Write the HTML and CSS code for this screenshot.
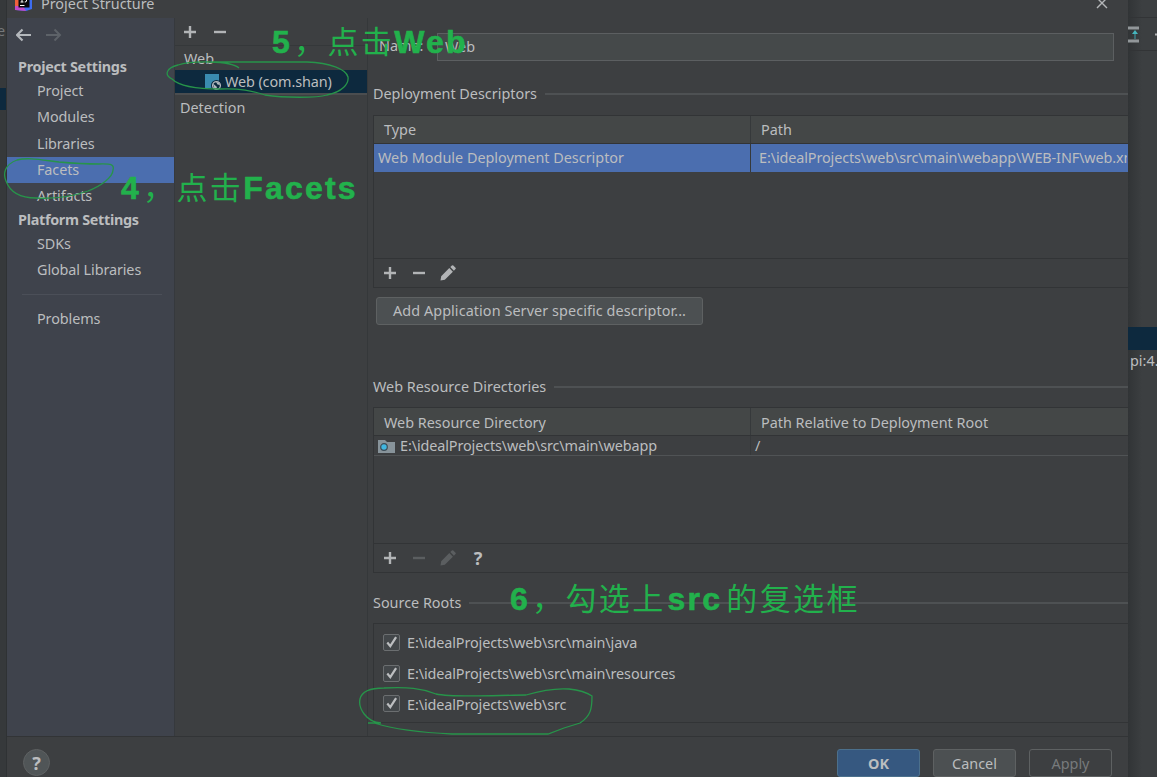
FILE: index.html
```html
<!DOCTYPE html>
<html lang="en">
<head>
  <meta charset="UTF-8" />
  <title>Project Structure</title>
  <meta name="viewport" content="width=device-width, initial-scale=1.0" />
  <link rel="stylesheet" href="styles.css">
</head>
<body>
  <svg class="defs" width="0" height="0">
    <symbol id="plus" viewBox="0 0 16 16"><path d="M8 2v12M2 8h12" stroke="currentColor" stroke-width="2.4" /></symbol>
    <symbol id="minus" viewBox="0 0 16 16"><path d="M2 8h12" stroke="currentColor" stroke-width="2.4" /></symbol>
    <symbol id="pencil" viewBox="0 0 16 16"><path d="M.5 15.5l.7-4.3L9.3 3.1l3.6 3.6-8.1 8.1zM10.3 2.1L11.9.5q.7-.6 1.4 0l2.2 2.2q.6.7 0 1.4l-1.6 1.6z" fill="currentColor" /></symbol>
    <symbol id="check" viewBox="0 0 15 15"><path d="M3.3 7.5l3 3.7 5.8-9" fill="none" stroke="#bcbec0" stroke-width="2.2" /></symbol>
  </svg>

  <div class="desktop">
    <div class="ide-left">
      <span class="ide-letter">e</span>
      <div class="ide-selected"></div>
    </div>

    <div class="dialog">
      <div class="titlebar">
        <svg class="logo" width="18" height="18" viewBox="0 0 18 18">
          <path d="M1 3l8-3 8 3v13l-6 2-10-1z" fill="#3d6df0" />
          <path d="M0 2l6-1-2 14-4 2z" fill="#f0613c" />
          <path d="M0 13h8l3 5-11-1z" fill="#c04ac8" />
          <rect x="3.5" y="3" width="11" height="11.5" fill="#08080c" />
          <path d="M5.5 5h3M7 5v4M5.5 9h3M11.5 5v3q0 1-1.8 1M5 12.5h4.5" stroke="#fff" fill="none" />
        </svg>
        <span class="title">Project Structure</span>
        <svg class="close" width="12" height="12" viewBox="0 0 12 12"><path d="M1 1l10 10M11 1L1 11" stroke="#b4b6b8" stroke-width="1.4" /></svg>
      </div>

      <div class="main">
        <div class="sidebar">
          <div class="history">
            <svg width="16" height="14" viewBox="0 0 16 14"><path d="M6.5 1.5L1 7l5.5 5.5M1 7h14" fill="none" stroke="#b4b8bc" stroke-width="2.2" /></svg>
            <svg width="16" height="14" viewBox="0 0 16 14"><path d="M8.5 1.5L14 7l-5.5 5.5M14 7H0" fill="none" stroke="#5d6268" stroke-width="2" /></svg>
          </div>
          <div class="nav-heading">Project Settings</div>
          <div class="nav-item">Project</div>
          <div class="nav-item">Modules</div>
          <div class="nav-item">Libraries</div>
          <div class="nav-item active">Facets</div>
          <div class="nav-item">Artifacts</div>
          <div class="nav-heading">Platform Settings</div>
          <div class="nav-item">SDKs</div>
          <div class="nav-item">Global Libraries</div>
          <div class="nav-divider"></div>
          <div class="nav-item">Problems</div>
        </div>

        <div class="facets">
          <div class="facets-toolbar">
            <svg class="icon"><use href="#plus" /></svg>
            <svg class="icon"><use href="#minus" /></svg>
          </div>
          <div class="facet-group">Web</div>
          <div class="facet-item">
            <svg width="18" height="18" viewBox="0 0 18 18">
              <rect x="0" y="1" width="14" height="14" fill="#3a8bb0" />
              <circle cx="11.5" cy="12.5" r="5.5" fill="#0d293e" />
              <circle cx="11.5" cy="12.5" r="3.9" fill="none" stroke="#b4babf" stroke-width="1.3" />
              <path d="M8 10.500l4 3.500-1 2.500-2-2zM11 9l1.500 2.500 2.500.5-1-2.500z" fill="#b4babf" />
            </svg>
            <span>Web (com.shan)</span>
          </div>
          <div class="facet-detection">Detection</div>
        </div>

        <div class="content">
          <div class="name-row">
            <label>Name:</label>
            <div class="field">Web</div>
          </div>

          <div class="group-title descriptors-title"><span>Deployment Descriptors</span></div>
          <div class="table descriptors">
            <div class="table-head"><div>Type</div><div>Path</div></div>
            <div class="table-row selected">
              <div>Web Module Deployment Descriptor</div>
              <div class="path">E:\idealProjects\web\src\main\webapp\WEB-INF\web.xml</div>
            </div>
            <div class="table-space"></div>
            <div class="table-toolbar">
              <svg class="icon"><use href="#plus" /></svg>
              <svg class="icon"><use href="#minus" /></svg>
              <svg class="icon"><use href="#pencil" /></svg>
            </div>
          </div>
          <div class="button add-descriptor">Add Application Server specific descriptor...</div>

          <div class="group-title resources-title"><span>Web Resource Directories</span></div>
          <div class="table resources">
            <div class="table-head"><div>Web Resource Directory</div><div>Path Relative to Deployment Root</div></div>
            <div class="table-row">
              <div>
                <svg width="17" height="14" viewBox="0 0 17 14">
                  <path d="M0 1h7l2 2h8v11H0z" fill="#87939a" />
                  <circle cx="6" cy="8" r="3.3" fill="#40b6e0" stroke="#3c4c56" stroke-width="1.2" />
                </svg>
                <span class="path">E:\idealProjects\web\src\main\webapp</span>
              </div>
              <div>/</div>
            </div>
            <div class="table-space"></div>
            <div class="table-toolbar">
              <svg class="icon"><use href="#plus" /></svg>
              <svg class="icon disabled"><use href="#minus" /></svg>
              <svg class="icon disabled"><use href="#pencil" /></svg>
              <span class="question">?</span>
            </div>
          </div>

          <div class="group-title roots-title"><span>Source Roots</span></div>
          <div class="roots">
            <div class="root"><svg class="checkbox"><use href="#check" /></svg><span class="path">E:\idealProjects\web\src\main\java</span></div>
            <div class="root"><svg class="checkbox"><use href="#check" /></svg><span class="path">E:\idealProjects\web\src\main\resources</span></div>
            <div class="root"><svg class="checkbox"><use href="#check" /></svg><span class="path">E:\idealProjects\web\src</span></div>
          </div>
        </div>
      </div>

      <div class="footer">
        <div class="help">?</div>
        <div class="button primary">OK</div>
        <div class="button">Cancel</div>
        <div class="button off">Apply</div>
      </div>
    </div>

    <div class="ide-right">
      <div class="ide-tools">
        <svg width="29" height="17" viewBox="0 0 29 17">
          <path d="M0 2h11M0 15h11" stroke="#92979a" stroke-width="3" />
          <path d="M7 5v8" stroke="#3d7f87" stroke-width="1.5" />
          <path d="M4 8l3-4 3 4z" fill="#45b5bd" />
          <path d="M27 8.5h2" stroke="#afb1b3" stroke-width="2" />
        </svg>
      </div>
      <div class="ide-selected"></div>
      <span class="ide-text">pi:4.</span>
    </div>

    <!-- hand-drawn notes over the dialog -->
    <svg class="circles" width="1157" height="777" viewBox="0 0 1157 777">
      <path d="M59 162C42 160 28 157 17 160C4 165 3 174 6 181C10 192 20 198 36 198C54 199 74 196 88 191C101 186 113 177 113 170C115 163 108 164 99 164C82 164 70 163 59 162" />
      <path d="M239 68C230 60 190 61 178 65C166 68 164 75 172 79C180 87 200 89 220 89C240 88 252 91 265 95C284 98 317 98 327 95C342 92 349 84 348 77C346 69 330 63 307 62H213" />
      <path d="M368 723H381C366 722 358 708 360 699C362 690 373 688 384 688C408 687 421 688 436 694C454 698 500 695 526 695C543 690 556 688 569 689C578 690 586 692 592 696C592 708 591 716 580 723L564 728L548 734H452C430 733 400 731 374 723" />
    </svg>
    <div class="note note-facets" lang="zh"><b class="step">4</b>，点击<b>Facets</b></div>
    <div class="note note-web" lang="zh"><b class="step">5</b>，点击<b>Web</b></div>
    <div class="note note-src" lang="zh"><b class="step">6</b>，勾选上<b class="word">src</b>的复选框</div>
  </div>
</body>
</html>
```

FILE: styles.css
```css
:root {
  --bg: #3d3f41;
  --text: #bbbdbf;
  --sidebar: #3f434c;
  --select: #4b6eaf;
  --select-dark: #0d293e;
  --line: #323436;
  --green: #22b14c;
}

* {
  box-sizing: border-box;
}

body {
  margin: 0;
  font-family: "Noto Sans", "Noto Sans CJK SC", sans-serif;
  font-size: 14.4px;
  line-height: 20px;
  color: var(--text);
  background-color: var(--bg);
  white-space: nowrap;
  overflow: hidden;
}

svg {
  display: block;
  flex: none;
}

.defs {
  position: absolute;
}

.desktop {
  position: relative;
  display: flex;
  width: 1157px;
  height: 777px;
  overflow: hidden;
}

/* IDE window behind the dialog */
.ide-left {
  width: 6px;
  padding-top: 21px;
  background-color: #36393b;
  overflow: hidden;
}

.ide-letter {
  display: block;
  margin-left: -3px;
  color: #75787a;
}

.ide-left .ide-selected {
  height: 22px;
  margin-top: 47px;
}

.ide-selected {
  background-color: var(--select-dark);
}

.ide-right {
  width: 29px;
  padding-top: 17px;
  background: linear-gradient(90deg, #313436, #3c3f41 14px);
  overflow: hidden;
}

.ide-tools {
  height: 34px;
  padding-top: 8px;
  border-top: 1px solid var(--line);
  border-bottom: 1px solid var(--line);
}

.ide-right .ide-selected {
  height: 23px;
  margin-top: 276px;
}

.ide-text {
  display: block;
  margin: 1px 0 0 2px;
}

/* Dialog */
.dialog {
  display: flex;
  flex-direction: column;
  width: 1122px;
  background-color: var(--bg);
  border-left: 1px solid #2f3234;
}

.titlebar {
  display: flex;
  height: 18px;
  padding: 0 20px 0 8px;
}

.logo {
  margin-top: -7px;
}

.title {
  margin: -6px auto 0 8px;
}

.close {
  margin-top: -3px;
}

.main {
  display: flex;
  height: 719px;
  border-bottom: 1px solid var(--line);
}

.sidebar {
  width: 168px;
  background-color: var(--sidebar);
  border-right: 1px solid #36393d;
}

.history {
  display: flex;
  gap: 14px;
  height: 38.4px;
  padding: 10px 0 0 9px;
}

.nav-heading {
  height: 22px;
  padding-left: 11px;
  line-height: 21px;
  font-weight: bold;
  letter-spacing: -0.3px;
}

.nav-item {
  height: 26.1px;
  padding-left: 30px;
  line-height: 25.4px;
  letter-spacing: -0.1px;
}

.nav-item.active {
  background-color: var(--select);
}

.nav-divider {
  height: 1px;
  margin: 11px 12px 11px 15px;
  background-color: #4b4f58;
}

.facets {
  width: 193px;
  border-right: 1px solid #35383a;
}

.facets-toolbar {
  display: flex;
  gap: 14px;
  height: 28px;
  padding: 6px 0 0 7px;
  border-bottom: 1px solid #35383a;
}

.icon {
  width: 16px;
  height: 16px;
  color: #b2b4b6;
}

.icon.disabled {
  color: #5b5e60;
}

.facet-group {
  height: 24px;
  padding-left: 9px;
  line-height: 25px;
}

.facet-item {
  display: flex;
  gap: 2px;
  align-items: center;
  height: 25px;
  padding-left: 30px;
  letter-spacing: -0.1px;
  background-color: var(--select-dark);
  border-bottom: 2px solid #4b4d4f;
}

.facet-detection {
  padding: 3px 0 0 5px;
}

.content {
  flex: 1;
  padding: 15px 0 0 5px;
}

.name-row {
  display: flex;
  height: 28px;
  padding: 0 14px 0 6px;
  line-height: 26px;
}

.name-row label {
  width: 58px;
}

.field {
  flex: 1;
  padding-left: 7px;
  background-color: #45494a;
  border: 1px solid #5c5f61;
}

.group-title {
  display: flex;
  align-items: center;
  gap: 8px;
  height: 20px;
}

.group-title::after {
  content: "";
  flex: 1;
  height: 2px;
  background-color: #4e5153;
}

.descriptors-title {
  margin-top: 23px;
  line-height: 22px;
}

.table {
  display: flex;
  flex-direction: column;
  border: 1px solid var(--line);
  border-right: none;
}

.descriptors {
  height: 173px;
  margin-top: 11px;
}

.table-head {
  display: flex;
  height: 28px;
  line-height: 28px;
  background-color: #444747;
  border-bottom: 1px solid var(--line);
}

.resources .table-head {
  line-height: 29px;
}

.table-head > div {
  padding-left: 10px;
}

.table-head > div:first-child,
.table-row > div:first-child {
  width: 377px;
  border-right: 1px solid #36393b;
}

.table-row {
  display: flex;
  height: 28px;
  line-height: 28px;
}

.table-row > div {
  flex: none;
  padding-left: 4px;
}

.table-row > div:last-child {
  width: 376px;
  padding-left: 8px;
  overflow: hidden;
}

.table-row.selected {
  background-color: var(--select);
}

.path {
  letter-spacing: -0.11px;
}

.table-space {
  flex: 1;
}

.table-toolbar {
  display: flex;
  gap: 13px;
  height: 29px;
  padding: 6px 0 0 8px;
  border-top: 1px solid var(--line);
}

.question {
  width: 18px;
  text-align: center;
  font-size: 18px;
  font-weight: bold;
  line-height: 17px;
}

.button {
  display: flex;
  align-items: center;
  justify-content: center;
  height: 28px;
  background-color: #4c5052;
  border: 1px solid #5e6162;
  border-radius: 3px;
}

.add-descriptor {
  width: 327px;
  margin: 9px 0 0 3px;
  letter-spacing: 0.08px;
}

.resources-title {
  margin-top: 52px;
}

.resources {
  height: 166px;
  margin-top: 10px;
}

.resources .table-row {
  height: 20px;
  line-height: 20px;
  border-bottom: 1px solid #505355;
}

.resources .table-row > div:first-child {
  display: flex;
  gap: 5px;
  align-items: center;
}

.resources .table-row > div:last-child {
  padding-left: 4px;
}

.roots-title {
  margin-top: 20px;
}

.roots {
  height: 100px;
  margin-top: 10px;
  padding: 4px 0 0 9px;
  border: 1px solid var(--line);
  border-right: none;
}

.root {
  display: flex;
  gap: 7px;
  align-items: center;
  height: 30.7px;
}

.checkbox {
  width: 17px;
  height: 17px;
  margin-top: -2px;
  background-color: #43474a;
  border: 1px solid #6b6e70;
  border-radius: 2px;
}

.footer {
  display: flex;
  gap: 13px;
  height: 40px;
  padding: 12px 16px 0;
}

.footer .button {
  width: 83px;
  padding-top: 1px;
}

.footer .primary {
  font-weight: bold;
  background-color: #365880;
  border-color: #4c708c;
}

.footer .off {
  color: #777a7c;
  background-color: transparent;
}

.help {
  width: 27px;
  height: 27px;
  margin-right: auto;
  text-align: center;
  font-size: 18px;
  font-weight: bold;
  line-height: 26px;
  background-color: #505557;
  border: 1px solid #5e6162;
  border-radius: 50%;
}

/* Notes */
.circles {
  position: absolute;
  top: 0;
  left: 0;
  fill: none;
  stroke: #27944a;
  stroke-width: 1.3;
}

.note {
  position: absolute;
  font-family: "Liberation Sans", "Noto Sans CJK SC", sans-serif;
  font-size: 31px;
  line-height: 40px;
  letter-spacing: 2.4px;
  color: var(--green);
}

.note b {
  font-size: 32px;
  font-weight: bold;
  letter-spacing: 2.2px;
  -webkit-text-stroke: 0.6px var(--green);
}

.note .step {
  margin-right: 2px;
}

.note .word {
  margin: 0 4px 0 2px;
}

.note-facets {
  top: 168px;
  left: 121px;
}

.note-web {
  top: 22px;
  left: 272px;
}

.note-src {
  top: 579px;
  left: 510px;
}
```
